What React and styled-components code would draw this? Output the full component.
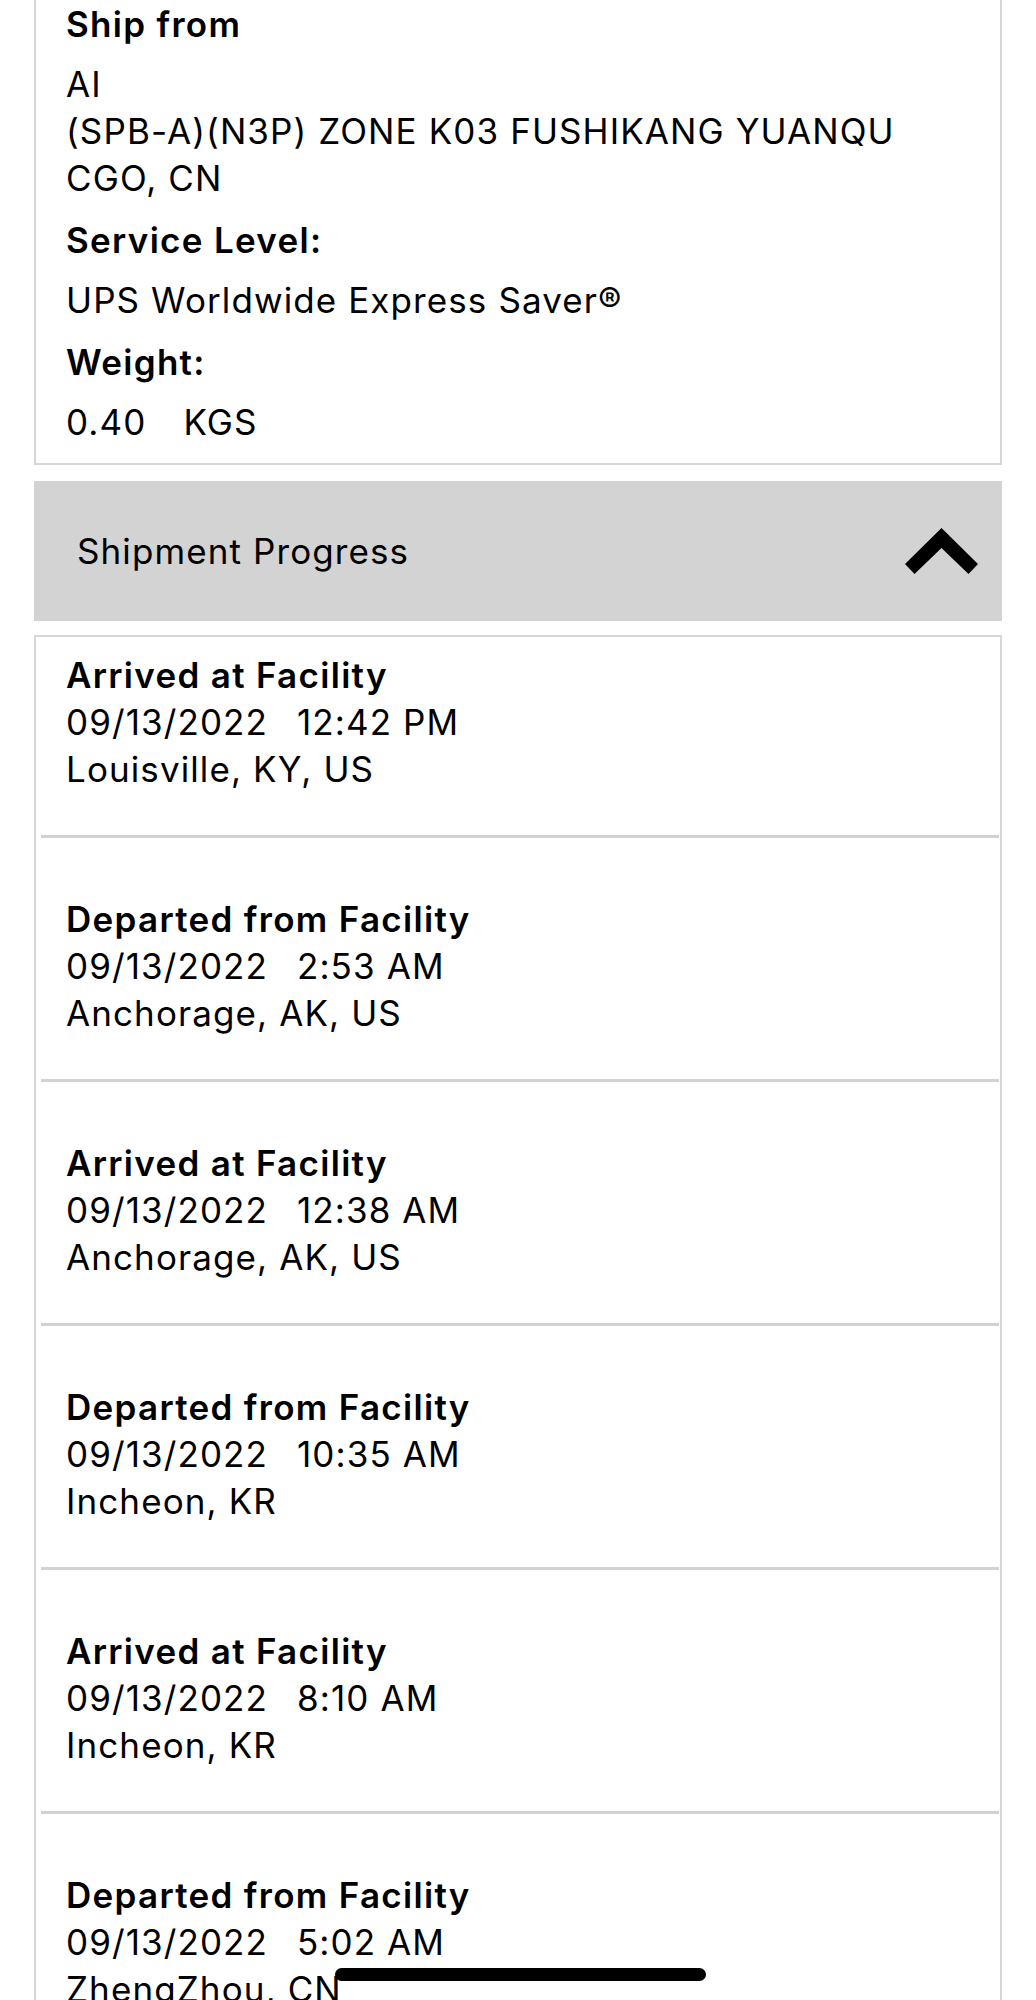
import styled, { createGlobalStyle } from "styled-components";

const GlobalStyle = createGlobalStyle`
  html, body {
    margin: 0;
    padding: 0;
    background: #ffffff;
  }
  body {
    font-family: Inter, "Noto Sans", "Liberation Sans", sans-serif;
    color: #000;
    -webkit-font-smoothing: antialiased;
  }
`;

const events = [
  { status: "Arrived at Facility", date: "09/13/2022", time: "12:42 PM", place: "Louisville, KY, US" },
  { status: "Departed from Facility", date: "09/13/2022", time: "2:53 AM", place: "Anchorage, AK, US" },
  { status: "Arrived at Facility", date: "09/13/2022", time: "12:38 AM", place: "Anchorage, AK, US" },
  { status: "Departed from Facility", date: "09/13/2022", time: "10:35 AM", place: "Incheon, KR" },
  { status: "Arrived at Facility", date: "09/13/2022", time: "8:10 AM", place: "Incheon, KR" },
  { status: "Departed from Facility", date: "09/13/2022", time: "5:02 AM", place: "ZhengZhou, CN" },
];

const ChevronUp = () => (
  <svg width="73" height="46" viewBox="0 0 73 46">
    <polygon points="36.5,0 73,36 63.5,46 36.5,20 9.5,46 0,36" fill="#000" />
  </svg>
);

const App = () => {
  return (
    <Page>
      <GlobalStyle />
      <InfoCard>
        <Label>Ship from</Label>
        <Value>
          <Line>AI</Line>
          <Line>(SPB-A)(N3P) ZONE K03 FUSHIKANG YUANQU</Line>
          <Line>CGO, CN</Line>
        </Value>
        <Label>Service Level:</Label>
        <Value>
          <Line>UPS Worldwide Express Saver®</Line>
        </Value>
        <Label>Weight:</Label>
        <Value>
          <Line>
            0.40<Unit>KGS</Unit>
          </Line>
        </Value>
      </InfoCard>

      <ProgressHeader>
        <HeaderTitle>Shipment Progress</HeaderTitle>
        <ChevronUp />
      </ProgressHeader>

      <EventsCard>
        {events.map((ev, i) => (
          <EventItem key={i}>
            <EventStatus>{ev.status}</EventStatus>
            <Line>
              {ev.date}
              <Time>{ev.time}</Time>
            </Line>
            <Line>{ev.place}</Line>
          </EventItem>
        ))}
      </EventsCard>

      <HomeIndicator />
    </Page>
  );
};

const Page = styled.div`
  width: 1036px;
  box-sizing: border-box;
  padding: 0 34px;
`;

const InfoCard = styled.section`
  border: 2px solid #d6d6d6;
  border-top: none;
  padding: 1px 24px 17px 30px;
`;

const Label = styled.div`
  font-size: 35px;
  line-height: 47px;
  font-weight: 600;
  letter-spacing: 1.3px;
  margin-bottom: 13px;
`;

const Value = styled.div`
  margin-bottom: 15px;
  &:last-child {
    margin-bottom: 0;
  }
`;

const Line = styled.div`
  font-size: 35px;
  line-height: 47px;
  font-weight: 400;
  letter-spacing: 1.1px;
  white-space: nowrap;
`;

const Unit = styled.span`
  margin-left: 37px;
`;

const Time = styled.span`
  margin-left: 29px;
`;

const ProgressHeader = styled.div`
  margin-top: 16px;
  height: 140px;
  background: #d3d3d3;
  display: flex;
  align-items: center;
  justify-content: space-between;
  padding: 0 24px 0 43px;
`;

const HeaderTitle = styled.div`
  font-size: 35px;
  line-height: 47px;
  font-weight: 400;
  letter-spacing: 1.1px;
`;

const EventsCard = styled.section`
  margin-top: 14px;
  border: 2px solid #d6d6d6;
  border-bottom: none;
  padding: 0 1px 0 5px;
`;

const EventItem = styled.div`
  padding: 58px 0 42px 25px;
  border-bottom: 3px solid #d2d2cf;
  &:first-child {
    padding-top: 15px;
  }
`;

const EventStatus = styled.div`
  font-size: 35px;
  line-height: 47px;
  font-weight: 600;
  letter-spacing: 1.3px;
`;

const HomeIndicator = styled.div`
  position: fixed;
  left: 335px;
  top: 1968px;
  width: 371px;
  height: 13px;
  border-radius: 7px;
  background: #000;
`;

export default App;
